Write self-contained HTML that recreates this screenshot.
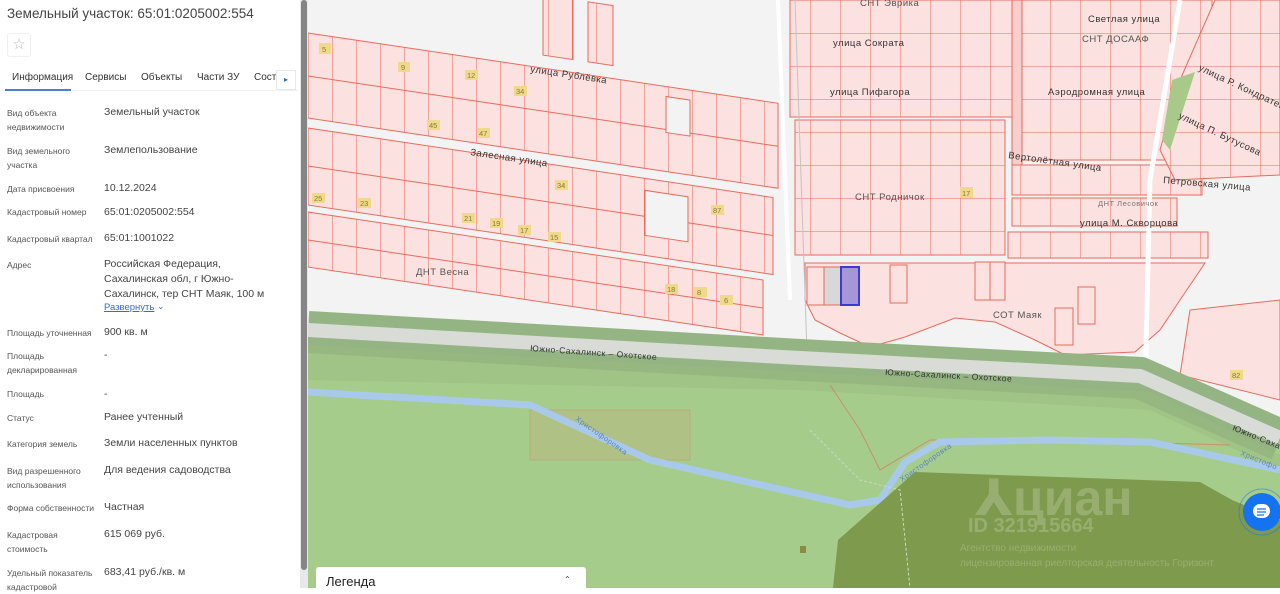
<!DOCTYPE html>
<html><head><meta charset="utf-8"><style>
*{margin:0;padding:0;box-sizing:border-box}
body{width:1280px;height:588px;overflow:hidden;font-family:"Liberation Sans",sans-serif;background:#fff;position:relative}
#panel{position:absolute;left:0;top:0;width:300px;height:588px;background:#fff;color:#333}
.t{position:absolute;white-space:nowrap}
.l{font-size:8.5px;color:#555;line-height:14px}
.v{font-size:10.5px;color:#444;line-height:15px}
#sb{position:absolute;left:300px;top:0;width:8px;height:588px;background:#e8e8e8}
#sb div{position:absolute;left:1px;top:0;width:6px;height:570px;background:#858585;border-radius:3px}
svg{position:absolute;left:308px;top:0}
</style></head><body>
<div id="panel">
<div class="t" style="left:7px;top:6px;font-size:13.5px;color:#444">Земельный участок: 65:01:0205002:554</div>
<div class="t" style="left:7px;top:33px;width:24px;height:24px;border:1px solid #f0f0f0;border-radius:3px;color:#bbb;font-size:15px;text-align:center;line-height:22px">☆</div>
<div class="t" style="left:12px;top:72px;font-size:10px;color:#333">Информация</div>
<div class="t" style="left:85px;top:72px;font-size:10px;color:#333">Сервисы</div>
<div class="t" style="left:141px;top:72px;font-size:10px;color:#333">Объекты</div>
<div class="t" style="left:197px;top:72px;font-size:10px;color:#333">Части ЗУ</div>
<div class="t" style="left:254px;top:72px;font-size:10px;color:#333">Соста</div>
<div class="t" style="left:276px;top:70px;width:20px;height:20px;background:#fff;border:1px solid #e4e8f0;color:#2a6fdb;font-size:8px;text-align:center;line-height:18px">▸</div>
<div class="t" style="left:0;top:90px;width:298px;height:1px;background:#eef0f3"></div>
<div class="t" style="left:5px;top:89px;width:66px;height:2px;background:#4a7fd8"></div>

<div class="t l" style="left:7px;top:106px">Вид объекта<br>недвижимости</div><div class="t v" style="left:104px;top:105px">Земельный участок</div>
<div class="t l" style="left:7px;top:144px">Вид земельного<br>участка</div><div class="t v" style="left:104px;top:143px">Землепользование</div>
<div class="t l" style="left:7px;top:182px">Дата присвоения</div><div class="t v" style="left:104px;top:181px">10.12.2024</div>
<div class="t l" style="left:7px;top:205px">Кадастровый номер</div><div class="t v" style="left:104px;top:205px">65:01:0205002:554</div>
<div class="t l" style="left:7px;top:232px">Кадастровый квартал</div><div class="t v" style="left:104px;top:231px">65:01:1001022</div>
<div class="t l" style="left:7px;top:258px">Адрес</div><div class="t v" style="left:104px;top:257px">Российская Федерация,<br>Сахалинская обл, г Южно-<br>Сахалинск, тер СНТ Маяк, 100 м</div>
<div class="t" style="left:104px;top:302px;font-size:9.5px;color:#2a6fdb;text-decoration:underline">Развернуть</div><div class="t" style="left:157px;top:301px;font-size:9px;color:#2a6fdb">⌄</div>
<div class="t l" style="left:7px;top:326px">Площадь уточненная</div><div class="t v" style="left:104px;top:325px">900 кв. м</div>
<div class="t l" style="left:7px;top:349px">Площадь<br>декларированная</div><div class="t v" style="left:104px;top:348px">-</div>
<div class="t l" style="left:7px;top:387px">Площадь</div><div class="t v" style="left:104px;top:387px">-</div>
<div class="t l" style="left:7px;top:411px">Статус</div><div class="t v" style="left:104px;top:410px">Ранее учтенный</div>
<div class="t l" style="left:7px;top:437px">Категория земель</div><div class="t v" style="left:104px;top:436px">Земли населенных пунктов</div>
<div class="t l" style="left:7px;top:464px">Вид разрешенного<br>использования</div><div class="t v" style="left:104px;top:463px">Для ведения садоводства</div>
<div class="t l" style="left:7px;top:501px">Форма собственности</div><div class="t v" style="left:104px;top:500px">Частная</div>
<div class="t l" style="left:7px;top:528px">Кадастровая<br>стоимость</div><div class="t v" style="left:104px;top:527px">615 069 руб.</div>
<div class="t l" style="left:7px;top:566px">Удельный показатель<br>кадастровой</div><div class="t v" style="left:104px;top:565px">683,41 руб./кв. м</div>
</div>
<div id="sb"><div></div></div>

<svg width="972" height="588" viewBox="308 0 972 588" font-family="Liberation Sans, DejaVu Sans, sans-serif">
<defs>
<pattern id="pv" width="24" height="40" patternUnits="userSpaceOnUse"><rect width="24" height="40" fill="#fbe1df"/><line x1="0" y1="0" x2="0" y2="40" stroke="#ea6a5c" stroke-width="1"/></pattern>
<pattern id="pg" width="30" height="33" patternUnits="userSpaceOnUse"><rect width="30" height="33" fill="#fbe1df"/><path d="M0 0V33M0 0H30" stroke="#ea6a5c" stroke-width="1" fill="none"/></pattern>
</defs>
<rect x="308" y="0" width="972" height="588" fill="#f3f3f4"/>
<g transform="translate(308,0) skewY(8.5)" stroke="#ea6a5c" stroke-width="1">
<rect x="0" y="33" width="470" height="85" fill="url(#pv)"/>
<line x1="0" y1="76" x2="470" y2="76"/>
<rect x="0" y="128" width="465" height="77" fill="url(#pv)"/>
<line x1="0" y1="166" x2="465" y2="166"/>
<rect x="0" y="212" width="455" height="55" fill="url(#pv)"/>
<line x1="0" y1="240" x2="455" y2="240"/>
<rect x="358" y="43" width="24" height="36" fill="#f3f3f4"/>
<rect x="337" y="140" width="43" height="45" fill="#f3f3f4"/>
<rect x="235" y="-40" width="30" height="60" fill="url(#pv)"/>
<rect x="280" y="-40" width="25" height="60" fill="url(#pv)"/>
</g>
<g stroke="#ea6a5c" stroke-width="1">
<rect x="790" y="-5" width="225" height="122" fill="url(#pg)"/>
<rect x="795" y="120" width="210" height="135" fill="url(#pg)"/>
<rect x="1022" y="-5" width="190" height="165" fill="url(#pg)"/>
<rect x="1012" y="0" width="10" height="175" fill="#f5cfcb"/>
<rect x="1012" y="165" width="190" height="30" fill="url(#pg)"/>
<rect x="1012" y="198" width="165" height="28" fill="url(#pg)"/>
<rect x="1008" y="232" width="200" height="26" fill="url(#pg)"/>
<polygon points="1215,0 1280,0 1280,175 1175,180 1160,150 1180,80" fill="url(#pg)"/>
<polygon points="1172,80 1195,72 1170,150 1162,140" fill="#a8c98a" stroke="none"/>
<polygon points="805,263 1205,263 1180,300 1160,330 1135,352 1065,355 1035,340 995,322 955,318 905,337 870,347 840,333 815,320 805,300" fill="#fbe1df"/>
<rect x="1055" y="308" width="18" height="37" fill="#fbe1df"/><rect x="1078" y="287" width="17" height="37" fill="#fbe1df"/>
<rect x="975" y="262" width="15" height="38" fill="#fbe1df"/><rect x="990" y="262" width="15" height="38" fill="#fbe1df"/>
<rect x="890" y="265" width="17" height="38" fill="#fbe1df"/>
<rect x="807" y="267" width="17" height="38" fill="#fbe1df"/>
<polygon points="1190,310 1280,300 1280,400 1180,375" fill="#fbe1df"/>
</g>
<rect x="824" y="267" width="17" height="38" fill="#d8d8d8" stroke="#ea6a5c"/>
<rect x="841" y="267" width="18" height="38" fill="#a597d6" stroke="#3a3ad6" stroke-width="2"/>
<path d="M1180,0 L1150,180 L1145,390" stroke="#fff" stroke-width="5" fill="none"/>
<line x1="795" y1="0" x2="815" y2="588" stroke="#c4c4c4" stroke-width="1"/>
<line x1="778" y1="0" x2="790" y2="300" stroke="#fff" stroke-width="4"/>
<polygon points="308,338 800,352 1140,368 1280,418 1280,588 308,588" fill="#a6cc8c"/>
<path d="M308,332 L800,360 L1140,378 L1280,440" stroke="#94b583" stroke-width="42" fill="none"/>
<path d="M308,330 L800,358 L1140,376 L1280,438" stroke="#d9dbd6" stroke-width="14" fill="none"/>
<polygon points="308,345 800,372 1150,392 1280,455 1280,470 1150,410 800,390 308,380" fill="#9aba80" opacity=".5"/>
<rect x="530" y="410" width="160" height="50" fill="#c5ae7c" opacity=".35" stroke="#d9785a"/>
<path d="M830,385 L860,430 L880,470 L930,440 L1050,440 L1230,445" stroke="#d9785a" fill="none" opacity=".7"/>
<path d="M308,392 L530,405 L650,460 L850,505 L880,500 L905,462 L940,442 L1050,440 L1150,442 L1280,470" stroke="#a9c9ea" stroke-width="7" fill="none"/>
<polygon points="915,472 1200,482 1232,500 1280,520 1280,588 833,588 838,540" fill="#7e9a4c"/>
<path d="M810,430 L860,480 L900,490 L910,588" stroke="#c9d9bf" stroke-dasharray="3,2" fill="none"/>
<rect x="800" y="546" width="6" height="7" fill="#8a8a40"/>
<g font-size="9.5" fill="#333" letter-spacing=".5">
<text x="530" y="72" transform="rotate(8.5 530 72)">улица Рублёвка</text>
<text x="470" y="155" transform="rotate(8.5 470 155)">Залесная улица</text>
<text x="416" y="275" fill="#555">ДНТ Весна</text>
<text x="860" y="6" fill="#555">СНТ Эврика</text>
<text x="833" y="46">улица Сократа</text>
<text x="830" y="95">улица Пифагора</text>
<text x="1088" y="22">Светлая улица</text>
<text x="1082" y="42" fill="#555">СНТ ДОСААФ</text>
<text x="1048" y="95">Аэродромная улица</text>
<text x="1008" y="158" transform="rotate(8 1008 158)">Вертолётная улица</text>
<text x="1163" y="183" transform="rotate(5 1163 183)">Петровская улица</text>
<text x="855" y="200" fill="#555">СНТ Родничок</text>
<text x="1098" y="206" font-size="7.5" fill="#777">ДНТ Лесовичок</text>
<text x="1080" y="226">улица М. Скворцова</text>
<text x="993" y="318" fill="#555">СОТ Маяк</text>
<text x="1198" y="70" transform="rotate(25 1198 70)">улица Р. Кондратен</text>
<text x="1178" y="118" transform="rotate(25 1178 118)">улица П. Бутусова</text>
<text x="530" y="351" font-size="8.5" transform="rotate(4 530 351)">Южно-Сахалинск – Охотское</text>
<text x="885" y="375" font-size="8.5" transform="rotate(3 885 375)">Южно-Сахалинск – Охотское</text>
<text x="1232" y="430" font-size="8.5" transform="rotate(22 1232 430)">Южно-Саха</text>
<text x="575" y="420" font-size="7.5" fill="#5d85c2" transform="rotate(35 575 420)">Христофоровка</text>
<text x="902" y="482" font-size="7.5" fill="#5d85c2" transform="rotate(-35 902 482)">Христофоровка</text>
<text x="1240" y="455" font-size="7.5" fill="#5d85c2" transform="rotate(22 1240 455)">Христофо</text>
</g>
<g font-size="7.5" fill="#8a7a3a">
<rect x="319" y="43" width="12" height="11" fill="#f0d98a"/><text x="322" y="52">5</text>
<rect x="398" y="62" width="12" height="10" fill="#f0d98a"/><text x="401" y="70">9</text>
<rect x="465" y="70" width="13" height="10" fill="#f0d98a"/><text x="467" y="78">12</text>
<rect x="427" y="120" width="13" height="10" fill="#f0d98a"/><text x="429" y="128">45</text>
<rect x="477" y="128" width="13" height="10" fill="#f0d98a"/><text x="479" y="136">47</text>
<rect x="514" y="86" width="13" height="10" fill="#f0d98a"/><text x="516" y="94">34</text>
<rect x="555" y="180" width="13" height="10" fill="#f0d98a"/><text x="557" y="188">34</text>
<rect x="711" y="205" width="13" height="10" fill="#f0d98a"/><text x="713" y="213">87</text>
<rect x="462" y="213" width="13" height="10" fill="#f0d98a"/><text x="464" y="221">21</text>
<rect x="490" y="218" width="13" height="10" fill="#f0d98a"/><text x="492" y="226">19</text>
<rect x="518" y="225" width="13" height="10" fill="#f0d98a"/><text x="520" y="233">17</text>
<rect x="548" y="232" width="13" height="10" fill="#f0d98a"/><text x="550" y="240">15</text>
<rect x="665" y="284" width="13" height="10" fill="#f0d98a"/><text x="667" y="292">18</text>
<rect x="694" y="287" width="13" height="10" fill="#f0d98a"/><text x="697" y="295">8</text>
<rect x="720" y="295" width="13" height="10" fill="#f0d98a"/><text x="724" y="303">6</text>
<rect x="960" y="187" width="13" height="11" fill="#f0d98a"/><text x="962" y="196">17</text>
<rect x="312" y="193" width="13" height="10" fill="#f0d98a"/><text x="314" y="201">25</text>
<rect x="358" y="198" width="13" height="10" fill="#f0d98a"/><text x="360" y="206">23</text>
<rect x="1230" y="370" width="13" height="10" fill="#f0d98a"/><text x="1232" y="378">82</text>
</g>
<g fill="#fff" opacity=".2">
<text x="975" y="515" font-size="50" font-weight="bold">⅄циан</text>
<text x="968" y="532" font-size="20" font-weight="bold">ID 321915664</text>
<text x="960" y="551" font-size="10">Агентство недвижимости</text>
<text x="960" y="566" font-size="10">лицензированная риелторская деятельность Горизонт</text>
</g>
<circle cx="1262" cy="512" r="19" fill="#1572f0"/>
<circle cx="1262" cy="512" r="23" fill="none" stroke="#1572f0" stroke-width="1" opacity=".5"/>
<rect x="1253" y="504" width="17" height="14" rx="7" fill="#fff"/>
<path d="M1257 509H1266M1257 512H1266M1257 515H1264" stroke="#1572f0" stroke-width="1.3"/>
<rect x="316" y="567" width="270" height="30" rx="3" fill="#fff"/>
<text x="326" y="586" font-size="13" fill="#222">Легенда</text>
<text x="564" y="582" font-size="8" fill="#333">⌃</text>
<text x="564" y="590" font-size="8" fill="#333">⌄</text>
</svg>
</body></html>
